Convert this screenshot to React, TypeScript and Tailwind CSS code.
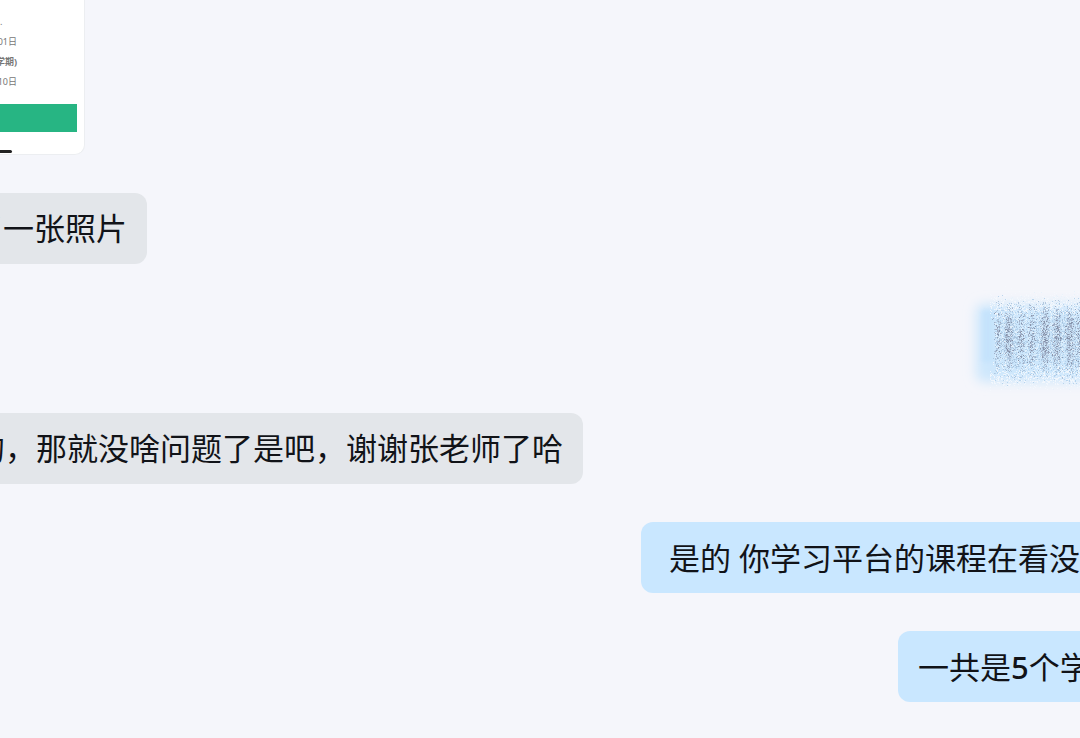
import type { ReactNode } from "react";

function Incoming({ children, width }: { children: ReactNode; width: string }) {
  return (
    <div className={`flex h-[71px] items-center justify-end overflow-hidden rounded-r-[12px] bg-[#e3e6ea] pr-5 pb-0.5 ${width}`}>
      <p className="shrink-0 whitespace-nowrap">{children}</p>
    </div>
  );
}

function Outgoing({ children, width }: { children: ReactNode; width: string }) {
  return (
    <div className={`flex h-[71px] items-center self-end overflow-hidden rounded-l-[12px] bg-[#c9e7ff] pl-5 ${width}`}>
      <p className="shrink-0 whitespace-pre">{children}</p>
    </div>
  );
}

function makeSpecks() {
  let seed = 20231;
  const rand = () => {
    seed = (seed * 1664525 + 1013904223) % 4294967296;
    return seed / 4294967296;
  };
  const gauss = () => (rand() + rand() + rand() + rand() - 2) / 1.15;
  const layers: { fill: string; d: string }[] = [];
  const stripes = [
    { x: 38, n: 0.5 }, { x: 49, n: 1.3 }, { x: 61, n: 0.8 }, { x: 72, n: 0.8 },
    { x: 85, n: 1.8 }, { x: 97, n: 1.2 }, { x: 110, n: 1.4 }, { x: 119, n: 0.6 },
  ];
  const scatter = (fill: string, count: number, spread: number) => {
    let d = "";
    for (let i = 0; i < count; i++) {
      const x = Math.floor(35 + rand() * 85);
      const y = Math.floor(61 + (rand() + rand() - 1) * spread);
      d += `M${x} ${y}h1v1h-1z`;
    }
    layers.push({ fill, d });
  };
  const columns = (fill: string, count: number, spread: number) => {
    let d = "";
    for (const s of stripes) {
      for (let i = 0; i < count * s.n; i++) {
        const x = Math.floor(s.x + gauss() * 4);
        const y = Math.floor(58 + (rand() + rand() - 1) * spread);
        d += `M${x} ${y}h1v1h-1z`;
      }
    }
    layers.push({ fill, d });
  };
  const fringe = (fill: string, count: number) => {
    let d = "";
    for (let i = 0; i < count; i++) {
      const x = Math.floor(30 + rand() * 90);
      const offset = gauss() * 12;
      const y = Math.floor(i % 2 ? 25 + offset : 97 + offset);
      d += `M${x} ${y}h1v1h-1z`;
    }
    layers.push({ fill, d });
  };
  scatter("#e6f2fc", 1400, 50);
  scatter("#b0cfea", 1500, 46);
  scatter("#a5bcd5", 350, 42);
  fringe("#f5f8fd", 900);
  columns("#a9c0d8", 150, 40);
  columns("#9aa5bc", 85, 34);
  columns("#7f8aa1", 38, 28);
  columns("#d0e7fa", 70, 38);
  return layers;
}

const specks = makeSpecks();

function Smudge() {
  return (
    <svg className="block h-[120px] w-[120px]" viewBox="0 0 120 120" role="img" aria-label="已涂抹的消息">
      <defs>
        <filter id="soft" x="-30%" y="-30%" width="180%" height="160%">
          <feGaussianBlur stdDeviation="6" />
        </filter>
        <filter id="edge" x="-60%" y="-30%" width="220%" height="160%">
          <feGaussianBlur stdDeviation="2" />
        </filter>
        <filter id="streak" x="-100%" y="-30%" width="300%" height="160%">
          <feGaussianBlur stdDeviation="2 6" />
        </filter>
      </defs>
      <rect x="16" y="24" width="140" height="78" rx="8" fill="#cde7fc" filter="url(#soft)" />
      <rect x="22" y="30" width="12" height="52" fill="#c3e2fc" opacity="0.8" filter="url(#edge)" />
      {[49, 85, 97, 110].map((x) => (
        <rect key={x} x={x - 2} y="40" width="4" height="38" fill="#8793aa" opacity="0.5" filter="url(#streak)" />
      ))}
      {specks.map((s, i) => (
        <path key={i} d={s.d} fill={s.fill} opacity="0.85" shapeRendering="crispEdges" />
      ))}
    </svg>
  );
}

function Attachment() {
  return (
    <div className="h-[155px] w-[85px] overflow-hidden rounded-br-[10px] border-r border-b border-[#eceef1] bg-white pt-3 text-[9px] leading-[20px] text-[#777777]">
      <div className="flex w-[17px] flex-col items-end whitespace-nowrap">
        <p className="w-[17px]">.</p>
        <p>01日</p>
        <p className="font-bold">学期)</p>
        <p>10日</p>
      </div>
      <div className="mt-3 h-7 w-[77px] bg-[#27b583]" />
      <div className="mt-[18px] h-[3px] w-3 rounded-r-full bg-[#222222]" />
    </div>
  );
}

export default function App() {
  return (
    <main className="flex min-h-screen flex-col overflow-hidden bg-[#f5f6fb] font-['Noto_Sans','Noto_Sans_CJK_SC',sans-serif] text-[31px] leading-[44px] text-[#111318]">
      <Attachment />
      <div className="mt-[38px] flex flex-col">
        <Incoming width="w-[147px]">了一张照片</Incoming>
        <div className="mt-4 self-end">
          <Smudge />
        </div>
        <div className="mt-[13px] flex flex-col gap-[38px]">
          <Incoming width="w-[583px]">的，那就没啥问题了是吧，谢谢张老师了哈</Incoming>
          <Outgoing width="w-[439px]">{" 是的 你学习平台的课程在看没"}</Outgoing>
          <Outgoing width="w-[182px]">
            一共是<span className="font-medium">5</span>个学
          </Outgoing>
        </div>
      </div>
    </main>
  );
}
